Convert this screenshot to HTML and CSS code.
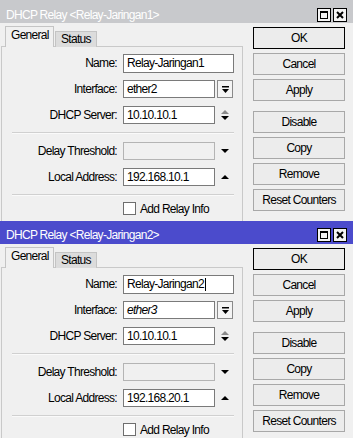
FILE: index.html
```html
<!DOCTYPE html>
<html>
<head>
<meta charset="utf-8">
<link rel="stylesheet" href="styles.css">
</head>
<body>
<div class="win win1 inactive">
  <div class="title">
    <span class="ttext">DHCP Relay &lt;Relay-Jaringan1&gt;</span>
    <div class="tbtns">
      <span class="tb"><svg width="14" height="14" viewBox="0 0 14 14"><rect x="3.5" y="3.5" width="7" height="7" fill="none" stroke="#000"/><rect x="3" y="3" width="8" height="2" fill="#000"/></svg></span>
      <span class="tb"><svg width="14" height="14" viewBox="0 0 14 14"><path d="M4 4 L10 10 M10 4 L4 10" stroke="#000" stroke-width="2"/></svg></span>
    </div>
  </div>
  <div class="main">
    <div class="left">
      <div class="tabs"><div class="tab active">General</div><div class="tab">Status</div></div>
      <div class="panel">
        <div class="row"><span class="lbl">Name:</span><div class="inp wide">Relay-Jaringan1</div></div>
        <div class="row"><span class="lbl">Interface:</span><div class="inp">ether2</div><span class="ctl dd"><svg width="9" height="9" viewBox="0 0 9 9"><rect x="1" y="1" width="7" height="1.5" fill="#000"/><path d="M1 4 H8 L4.5 8 Z" fill="#000"/></svg></span></div>
        <div class="row"><span class="lbl">DHCP Server:</span><div class="inp">10.10.10.1</div><span class="ctl"><svg width="10" height="12" viewBox="0 0 10 12"><path d="M1 5 H9 L5 1 Z" fill="#8a8a8a"/><path d="M1 7 H9 L5 11 Z" fill="#000"/></svg></span></div>
        <div class="sep"></div>
        <div class="row"><span class="lbl">Delay Threshold:</span><div class="inp dis"></div><span class="ctl"><svg width="10" height="12" viewBox="0 0 10 12"><path d="M1 4 H9 L5 8 Z" fill="#000"/></svg></span></div>
        <div class="row"><span class="lbl">Local Address:</span><div class="inp">192.168.10.1</div><span class="ctl"><svg width="10" height="12" viewBox="0 0 10 12"><path d="M1 8 H9 L5 4 Z" fill="#000"/></svg></span></div>
        <div class="sep"></div>
        <div class="row chkrow"><span class="lbl"></span><span class="chk"></span><span class="chktext">Add Relay Info</span></div>
      </div>
    </div>
    <div class="buttons">
      <div class="btn def">OK</div>
      <div class="btn">Cancel</div>
      <div class="btn">Apply</div>
      <div class="btn gap">Disable</div>
      <div class="btn">Copy</div>
      <div class="btn">Remove</div>
      <div class="btn">Reset Counters</div>
    </div>
  </div>
</div>
<div class="win win2 active">
  <div class="title">
    <span class="ttext">DHCP Relay &lt;Relay-Jaringan2&gt;</span>
    <div class="tbtns">
      <span class="tb"><svg width="14" height="14" viewBox="0 0 14 14"><rect x="3.5" y="3.5" width="7" height="7" fill="none" stroke="#000"/><rect x="3" y="3" width="8" height="2" fill="#000"/></svg></span>
      <span class="tb"><svg width="14" height="14" viewBox="0 0 14 14"><path d="M4 4 L10 10 M10 4 L4 10" stroke="#000" stroke-width="2"/></svg></span>
    </div>
  </div>
  <div class="main">
    <div class="left">
      <div class="tabs"><div class="tab active">General</div><div class="tab">Status</div></div>
      <div class="panel">
        <div class="row"><span class="lbl">Name:</span><div class="inp wide">Relay-Jaringan2<span class="caret"></span></div></div>
        <div class="row"><span class="lbl">Interface:</span><div class="inp"><i>ether3</i></div><span class="ctl dd"><svg width="9" height="9" viewBox="0 0 9 9"><rect x="1" y="1" width="7" height="1.5" fill="#000"/><path d="M1 4 H8 L4.5 8 Z" fill="#000"/></svg></span></div>
        <div class="row"><span class="lbl">DHCP Server:</span><div class="inp">10.10.10.1</div><span class="ctl"><svg width="10" height="12" viewBox="0 0 10 12"><path d="M1 5 H9 L5 1 Z" fill="#8a8a8a"/><path d="M1 7 H9 L5 11 Z" fill="#000"/></svg></span></div>
        <div class="sep"></div>
        <div class="row"><span class="lbl">Delay Threshold:</span><div class="inp dis"></div><span class="ctl"><svg width="10" height="12" viewBox="0 0 10 12"><path d="M1 4 H9 L5 8 Z" fill="#000"/></svg></span></div>
        <div class="row"><span class="lbl">Local Address:</span><div class="inp">192.168.20.1</div><span class="ctl"><svg width="10" height="12" viewBox="0 0 10 12"><path d="M1 8 H9 L5 4 Z" fill="#000"/></svg></span></div>
        <div class="sep"></div>
        <div class="row chkrow"><span class="lbl"></span><span class="chk"></span><span class="chktext">Add Relay Info</span></div>
      </div>
    </div>
    <div class="buttons">
      <div class="btn def">OK</div>
      <div class="btn">Cancel</div>
      <div class="btn">Apply</div>
      <div class="btn gap">Disable</div>
      <div class="btn">Copy</div>
      <div class="btn">Remove</div>
      <div class="btn">Reset Counters</div>
    </div>
  </div>
</div>
</body>
</html>
```
FILE: styles.css
```css
* { box-sizing: border-box; }
html, body { margin: 0; padding: 0; }
body {
  width: 353px;
  height: 438px;
  overflow: hidden;
  background: #f0f0f0;
  font-family: "Liberation Sans", Arial, sans-serif;
  font-size: 12px;
  letter-spacing: -0.7px;
  color: #000;
}
.win {
  width: 353px;
  background: #f0f0f0;
  display: flex;
  flex-direction: column;
  overflow: hidden;
}
.win1 { height: 221px; }
.win2 { height: 217px; }
.title {
  flex: none;
  height: 23px;
  display: flex;
  align-items: center;
  justify-content: space-between;
  color: #fff;
  font-size: 12px;
}
.win1 .title { padding: 6px 6px 0 6px; background: #c8c9cc; }
.win2 .title { padding: 4px 6px 0 6px; background: #4b4bcc; }
.tbtns { display: flex; gap: 2px; }
.tb {
  width: 14px;
  height: 14px;
  background: #f4f4f4;
  border: 1px solid #000;
  display: flex;
  align-items: center;
  justify-content: center;
  letter-spacing: 0;
}
.tb svg { display: block; margin: -1px; }
.main { flex: 1; display: flex; }
.left {
  width: 242px;
  margin-left: 1px;
  display: flex;
  flex-direction: column;
}
.tabs {
  height: 23px;
  display: flex;
  align-items: flex-end;
  padding-left: 4px;
}
.tab {
  height: 16px;
  padding: 0 5px;
  line-height: 14px;
  background: #dcdcdc;
  border: 1px solid #c4c4c4;
  border-bottom: none;
  margin-bottom: -1px;
  position: relative;
}
.tab.active {
  height: 21px;
  width: 49px;
  line-height: 17px;
  background: #f0f0f0;
  z-index: 1;
  margin-right: 1px;
}
.panel {
  flex: 1;
  border: 1px solid #c9c9c9;
  border-bottom: none;
  padding-top: 7px;
  display: flex;
  flex-direction: column;
  gap: 8px;
}
.row {
  height: 18px;
  flex: none;
  display: flex;
  align-items: center;
}
.lbl {
  width: 115px;
  text-align: right;
  margin-right: 6px;
  white-space: nowrap;
}
.inp {
  width: 92px;
  height: 18px;
  background: #fff;
  border: 1px solid #7a7a7a;
  padding-left: 3px;
  line-height: 16px;
  white-space: nowrap;
  display: flex;
  align-items: center;
}
.inp.wide { width: 111px; height: 19px; }
.inp.dis { background: #f0f0f0; border-color: #b4b4b4; }
.caret { width: 1px; height: 13px; background: #000; margin-left: 1px; }
.ctl {
  width: 16px;
  height: 18px;
  margin-left: 2px;
  display: flex;
  align-items: center;
  justify-content: center;
}
.ctl.dd { border: 1px solid #8a8a8a; background: #f4f4f4; }
.sep {
  height: 2px;
  flex: none;
  margin: 0 8px 0 10px;
  border-top: 1px solid #d0d0d0;
  border-bottom: 1px solid #fafafa;
}
.chkrow { height: 13px; margin-top: -2px; }
.chk {
  width: 13px;
  height: 13px;
  background: #fff;
  border: 1px solid #6e6e6e;
  margin-right: 4px;
}
.buttons {
  width: 92px;
  margin-left: 10px;
  padding-top: 4px;
  display: flex;
  flex-direction: column;
  gap: 4px;
}
.btn {
  height: 22px;
  border: 1px solid #a8a8a8;
  background: #ececec;
  display: flex;
  align-items: center;
  justify-content: center;
  white-space: nowrap;
}
.btn.def { border-color: #000; }
.btn.gap { margin-top: 6px; }
```
